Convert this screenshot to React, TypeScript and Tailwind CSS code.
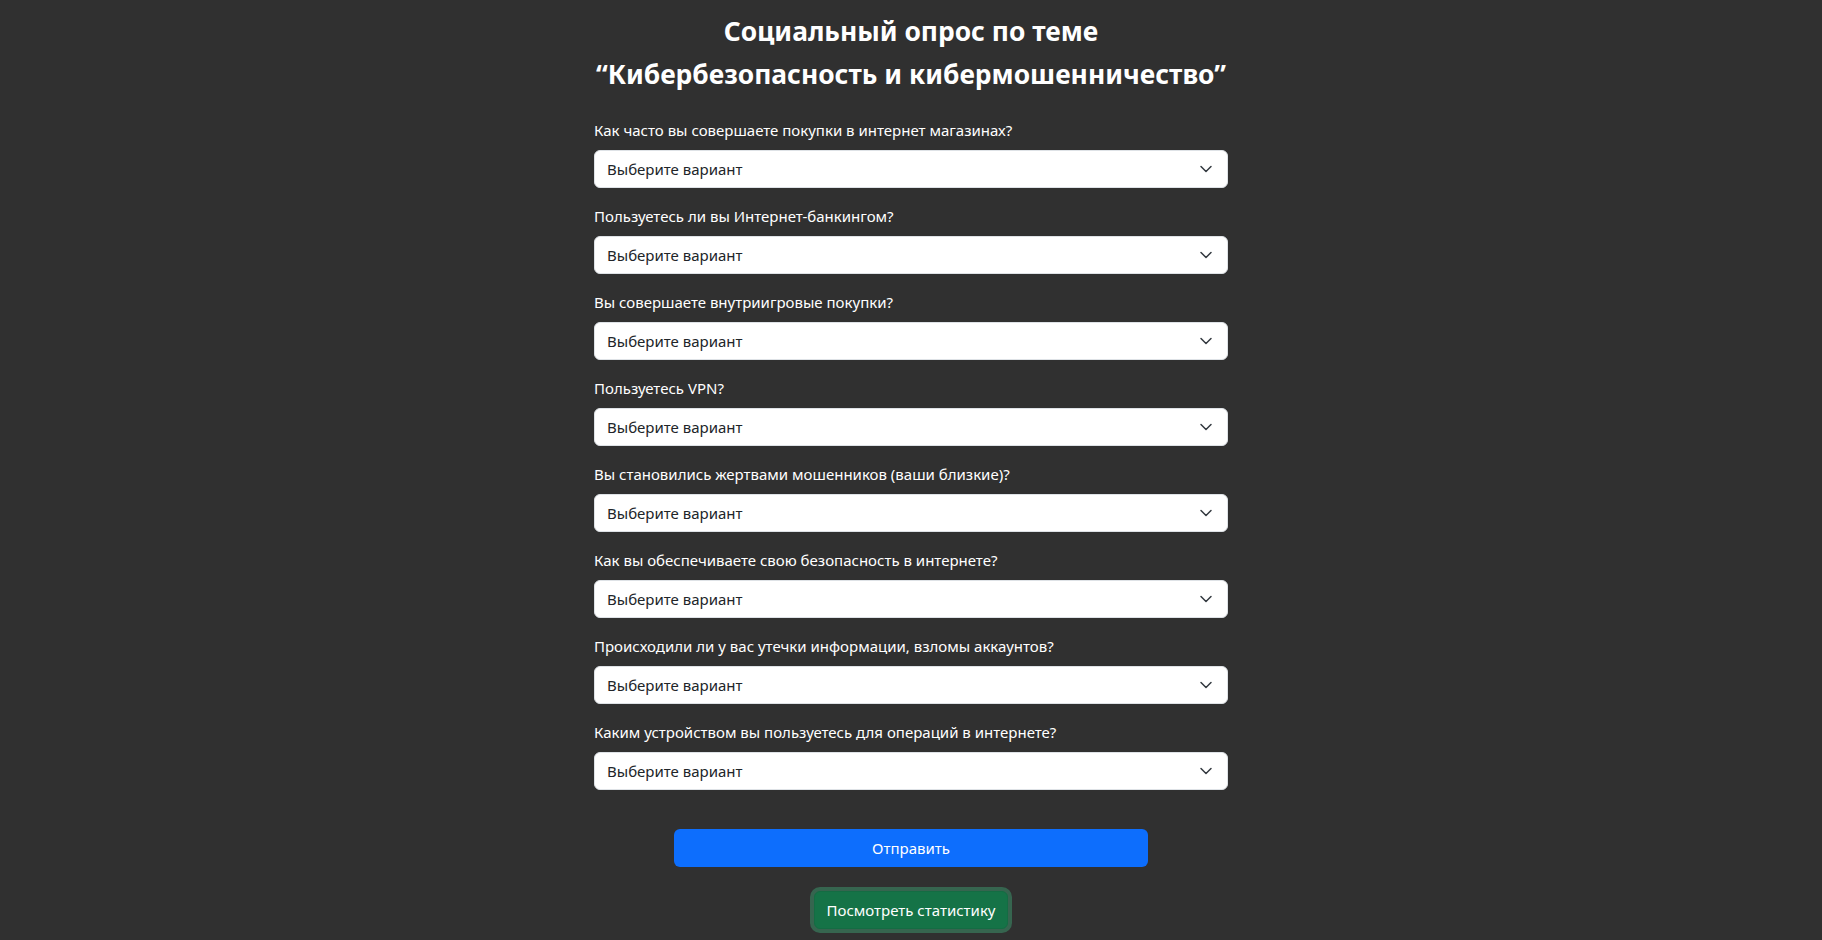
import React from 'react';

const questions = [
  'Как часто вы совершаете покупки в интернет магазинах?',
  'Пользуетесь ли вы Интернет-банкингом?',
  'Вы совершаете внутриигровые покупки?',
  'Пользуетесь VPN?',
  'Вы становились жертвами мошенников (ваши близкие)?',
  'Как вы обеспечиваете свою безопасность в интернете?',
  'Происходили ли у вас утечки информации, взломы аккаунтов?',
  'Каким устройством вы пользуетесь для операций в интернете?',
];

const Chevron = () => (
  <svg width="14" height="10" viewBox="0 2 16 12" fill="none" className="shrink-0 mr-[2px]">
    <path d="m2 5 6 6 6-6" stroke="#343a40" strokeWidth="1.8" strokeLinecap="round" strokeLinejoin="round" />
  </svg>
);

export default function App() {
  return (
    <div className="min-h-screen bg-[#303030] text-white font-['Segoe_UI','Noto_Sans',sans-serif]">
      <div className="w-[634px] mx-auto pt-[10px] pb-[8px]">
        <h1 className="text-center text-[26.4px] leading-[43px] font-bold mb-[22px] whitespace-nowrap">
          Социальный опрос по теме
          <br />
          “Кибербезопасность и кибермошенничество”
        </h1>

        <form className="flex flex-col gap-4">
          {questions.map((q, i) => (
            <div key={i} className="flex flex-col">
              <label className="text-[15px] leading-6 mb-2">{q}</label>
              <div className="h-[38px] bg-white border border-[#dee2e6] rounded-[6px] flex items-center justify-between pl-3 pr-3 text-[#212529] text-[15px]">
                <span>Выберите вариант</span>
                <Chevron />
              </div>
            </div>
          ))}
        </form>

        <div className="flex flex-col items-center mt-[39px] gap-[24px]">
          <button className="w-[474px] h-[38px] bg-[#0d6efd] rounded-[6px] text-[15px] text-white">
            Отправить
          </button>
          <button className="h-[38px] px-3 bg-[#157347] border border-[#146c43] rounded-[6px] text-[15px] text-white shadow-[0_0_0_4px_rgba(60,153,110,0.5)]">
            Посмотреть статистику
          </button>
        </div>
      </div>
    </div>
  );
}
